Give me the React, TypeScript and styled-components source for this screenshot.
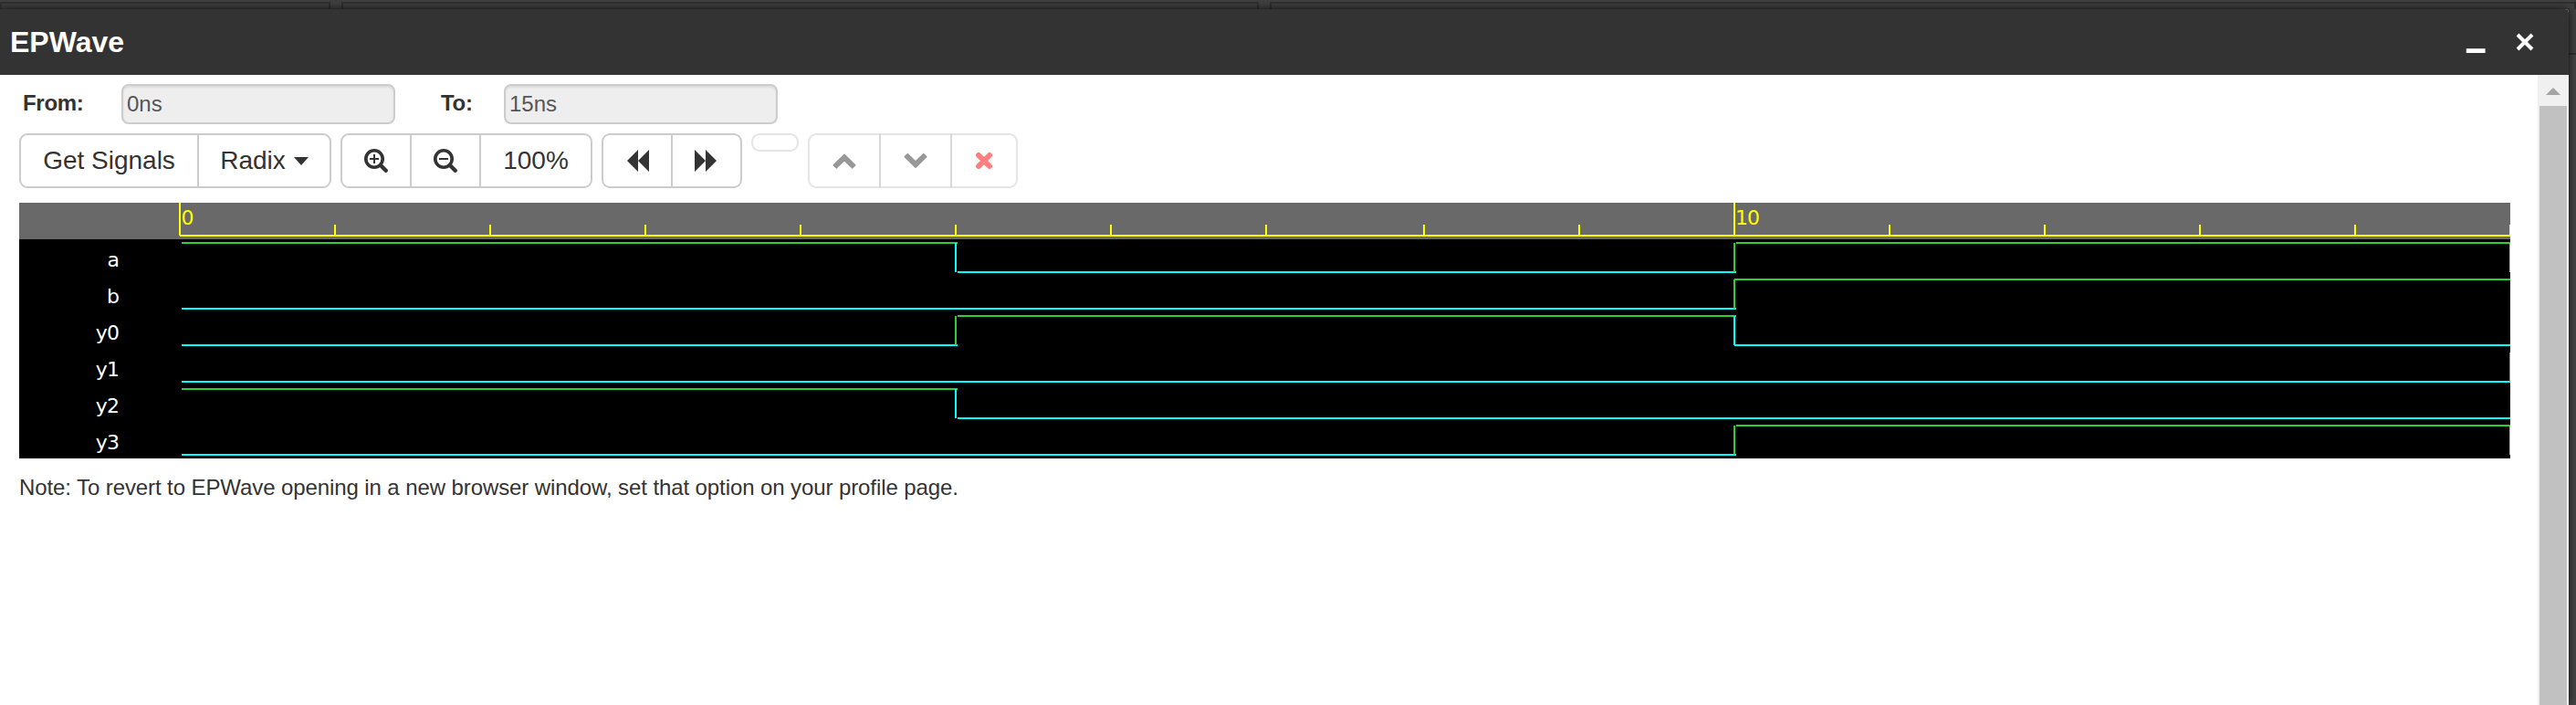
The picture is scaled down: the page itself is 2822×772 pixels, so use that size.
import React from 'react';
import styled, { createGlobalStyle } from 'styled-components';

const Global = createGlobalStyle`
  *, *::before, *::after { box-sizing: border-box; }
  html, body { margin: 0; height: 772px; overflow: hidden; background: #404040; }
  body { font-family: "Liberation Sans", Arial, sans-serif; color: #333; font-size: 24px; }
`;

const Page = styled.div`
  width: 2822px;
  height: 772px;
  overflow: hidden;
  background: linear-gradient(#404040 58px, #2e2e2e 58px 60px, #454545 60px);
`;

const Backdrop = styled.div`
  display: flex;
  gap: 12px;
  height: 10px;
  padding-top: 2px;
  background: #404040;
`;

const BackdropPane = styled.div<{ $width?: number }>`
  flex: ${(p) => (p.$width ? `0 0 ${p.$width}px` : '1')};
  height: 8px;
  border: 2px solid #303030;
  border-bottom: 0;
  background: #404040;
`;

const Dialog = styled.section`
  position: relative;
  display: flex;
  flex-direction: column;
  width: 2814px;
  height: 762px;
  background: #fff;
  border-top-right-radius: 4px;
  box-shadow: 0 0 10px rgba(0, 0, 0, 0.8);
`;

const TitleBar = styled.header`
  display: flex;
  align-items: center;
  height: 72px;
  flex: none;
  padding: 0 36px 0 11px;
  background: #333;
  border-top-right-radius: 4px;
`;

const Title = styled.h1`
  flex: 1;
  margin: 0;
  font-size: 32px;
  line-height: 72px;
  font-weight: 700;
  color: #fff;
`;

const WindowControls = styled.div`
  display: flex;
  gap: 30px;
`;

const Body = styled.div`
  display: flex;
  flex: 1;
  min-height: 0;
`;

const Content = styled.main`
  flex: 1;
  padding: 10px 30px 0 21px;
`;

const ScrollBar = styled.div`
  display: flex;
  flex-direction: column;
  width: 34px;
  background: #f0f0f0;
`;

const ScrollArrow = styled.div`
  display: flex;
  height: 34px;
  justify-content: center;
  padding-top: 14px;
`;

const ScrollThumb = styled.div`
  flex: 1;
  margin: 0 2px;
  background: #c1c1c1;
`;

const RangeForm = styled.div`
  display: flex;
  height: 54px;
  padding-left: 4px;
`;

const RangeLabel = styled.label<{ $width: number }>`
  width: ${(p) => p.$width}px;
  font-weight: 700;
  letter-spacing: -0.3px;
  line-height: 41px;
`;

const RangeInput = styled.div`
  width: 300px;
  height: 44px;
  margin-right: 50px;
  padding-left: 4px;
  border: 2px solid #ccc;
  border-radius: 8px;
  background: #eee;
  box-shadow: inset 0 2px 2px rgba(0, 0, 0, 0.075);
  color: #555;
  line-height: 40px;
`;

const Toolbar = styled.div`
  display: flex;
  align-items: flex-start;
  gap: 10px;
  height: 76px;
`;

const ButtonGroup = styled.div`
  display: flex;
`;

const Button = styled.div<{ $width: number; $empty?: boolean; $disabled?: boolean }>`
  display: flex;
  align-items: center;
  justify-content: center;
  width: ${(p) => p.$width}px;
  height: ${(p) => (p.$empty ? 20 : 60)}px;
  border: 2px solid #ccc;
  background: #fff;
  opacity: ${(p) => (p.$disabled ? 0.5 : 1)};
  font-size: 28px;
  white-space: nowrap;
  & + & { margin-left: -2px; }
  &:first-child { border-top-left-radius: 9px; border-bottom-left-radius: 9px; }
  &:last-child { border-top-right-radius: 9px; border-bottom-right-radius: 9px; }
`;

const Caret = styled.span`
  margin-left: 9px;
  border: 8px solid transparent;
  border-top: 9px solid #333;
  border-bottom: 0;
`;

const Waveform = styled.svg`
  display: block;
  background: #000;
  font: 22px "DejaVu Sans", sans-serif;
  letter-spacing: -0.9px;
`;

const Note = styled.p`
  margin: 15px 0 0;
  line-height: 34px;
  letter-spacing: -0.095px;
`;

const TICKS = [0, 170, 340, 510, 680, 850, 1020, 1190, 1363, 1533, 1703, 1873, 2043, 2213, 2383, 2553];
const HIGH = '#32cd32';
const LOW = '#00ffff';

// levels per 5ns segment; `last` is the level that follows the final sample
const SIGNALS = [
  { name: 'a', levels: [1, 0, 1], last: 0 },
  { name: 'b', levels: [0, 0, 1], last: 1 },
  { name: 'y0', levels: [0, 1, 0], last: 0 },
  { name: 'y1', levels: [0, 0, 0], last: 1 },
  { name: 'y2', levels: [1, 0, 0], last: 0 },
  { name: 'y3', levels: [0, 0, 1], last: 0 },
];
const EDGES = [1, 851, 1704, 2554];

function Wave({ levels, last, row }: { levels: number[]; last: number; row: number }) {
  const top = 43 + row * 40;
  const all = [...levels, last];
  return (
    <g>
      {levels.map((v, i) => {
        const joined = i === 2 && (row === 1 || row === 2);
        const start = EDGES[i] + (joined ? 0 : 2);
        return (
          <rect key={i} x={start} y={v ? top : top + 32} width={EDGES[i + 1] + 2 - start} height={2} fill={v ? HIGH : LOW} />
        );
      })}
      {all.slice(1).map((v, i) =>
        v !== all[i] ? (
          <rect key={i} x={EDGES[i + 1] - 1} y={top + 1} width={2} height={32} fill={v ? HIGH : LOW} />
        ) : null,
      )}
    </g>
  );
}

function ZoomIcon({ plus }: { plus?: boolean }) {
  return (
    <svg width="26" height="26" viewBox="0 0 26 26" fill="none" stroke="#333">
      <circle cx="11" cy="11" r="9.2" strokeWidth="3.6" />
      <path d="M18 18L23.7 23.7" strokeWidth="4.4" strokeLinecap="round" />
      <path d={plus ? 'M6 11H16M11 6V16' : 'M6 11H16'} strokeWidth="2" />
    </svg>
  );
}

function SeekIcon({ forward }: { forward?: boolean }) {
  return (
    <svg width="26" height="24" viewBox="0 0 26 24" fill="#333">
      <path d={forward ? 'M0 0L12 12L0 24ZM12 0L24 12L12 24Z' : 'M14 0L2 12L14 24ZM26 0L14 12L26 24Z'} />
    </svg>
  );
}

function Chevron({ down }: { down?: boolean }) {
  return (
    <svg width="26" height="18" viewBox="0 0 26 18" fill="#333" stroke="#333" strokeWidth="1.6" strokeLinejoin="round">
      <path
        d={
          down
            ? 'M1.3 4.6L4.2 1.7L13 10.2L21.8 1.7L24.7 4.6L13 16.2Z'
            : 'M1.3 13.9L4.2 16.8L13 8.3L21.8 16.8L24.7 13.9L13 2.3Z'
        }
      />
    </svg>
  );
}

function RemoveIcon() {
  return (
    <svg width="20" height="20" viewBox="0 0 20 20" fill="none" stroke="#f00" strokeWidth="6" strokeLinecap="round">
      <path d="M4 4L16 16M16 4L4 16" />
    </svg>
  );
}

export default function App() {
  return (
    <Page>
      <Global />
      <Backdrop>
        <BackdropPane $width={362} />
        <BackdropPane $width={1005} />
        <BackdropPane />
      </Backdrop>
      <Dialog>
        <TitleBar>
          <Title>EPWave</Title>
          <WindowControls>
            <svg width="24" height="24" viewBox="0 0 24 24">
              <rect x="1.8" y="19.2" width="20.8" height="4.8" fill="#fff" />
            </svg>
            <svg width="24" height="24" viewBox="0 0 24 24" fill="none" stroke="#fff" strokeWidth="4">
              <path d="M4 4L20 20M20 4L4 20" />
            </svg>
          </WindowControls>
        </TitleBar>
        <Body>
          <Content>
            <RangeForm>
              <RangeLabel $width={108}>From:</RangeLabel>
              <RangeInput>0ns</RangeInput>
              <RangeLabel $width={69}>To:</RangeLabel>
              <RangeInput>15ns</RangeInput>
            </RangeForm>
            <Toolbar>
              <ButtonGroup>
                <Button $width={197}>Get Signals</Button>
                <Button $width={147}>Radix<Caret /></Button>
              </ButtonGroup>
              <ButtonGroup>
                <Button $width={78}><ZoomIcon plus /></Button>
                <Button $width={78}><ZoomIcon /></Button>
                <Button $width={124}>100%</Button>
              </ButtonGroup>
              <ButtonGroup>
                <Button $width={78}><SeekIcon /></Button>
                <Button $width={78}><SeekIcon forward /></Button>
              </ButtonGroup>
              <ButtonGroup>
                <Button $width={52} $empty $disabled />
              </ButtonGroup>
              <ButtonGroup>
                <Button $width={80} $disabled><Chevron /></Button>
                <Button $width={80} $disabled><Chevron down /></Button>
                <Button $width={74} $disabled><RemoveIcon /></Button>
              </ButtonGroup>
            </Toolbar>
            <Waveform width="2729" height="280" viewBox="0 0 2729 280" shapeRendering="crispEdges">
              <rect width="2729" height="40" fill="#696969" />
              {SIGNALS.map((s, i) => (
                <text key={s.name} x="109" y={70 + i * 40} textAnchor="end" fill="#fff">{s.name}</text>
              ))}
              <g transform="translate(175 0)">
                <rect x="1" y="35" width="2553" height="2" fill="#ff0" />
                {TICKS.map((x, i) => (
                  <rect key={x} x={x} y={i % 10 ? 24 : 0} width="2" height={i % 10 ? 12 : 36} fill="#ff0" />
                ))}
                <text x="2.5" y="24" fill="#ff0">0</text>
                <text x="1705" y="24" fill="#ff0">10</text>
                {SIGNALS.map((s, i) => <Wave key={s.name} levels={s.levels} last={s.last} row={i} />)}
              </g>
            </Waveform>
            <Note>Note: To revert to EPWave opening in a new browser window, set that option on your profile page.</Note>
          </Content>
          <ScrollBar>
            <ScrollArrow>
              <svg width="16" height="8" viewBox="0 0 16 8"><path d="M0 8L8 0L16 8Z" fill="#a3a3a3" /></svg>
            </ScrollArrow>
            <ScrollThumb />
          </ScrollBar>
        </Body>
      </Dialog>
    </Page>
  );
}
